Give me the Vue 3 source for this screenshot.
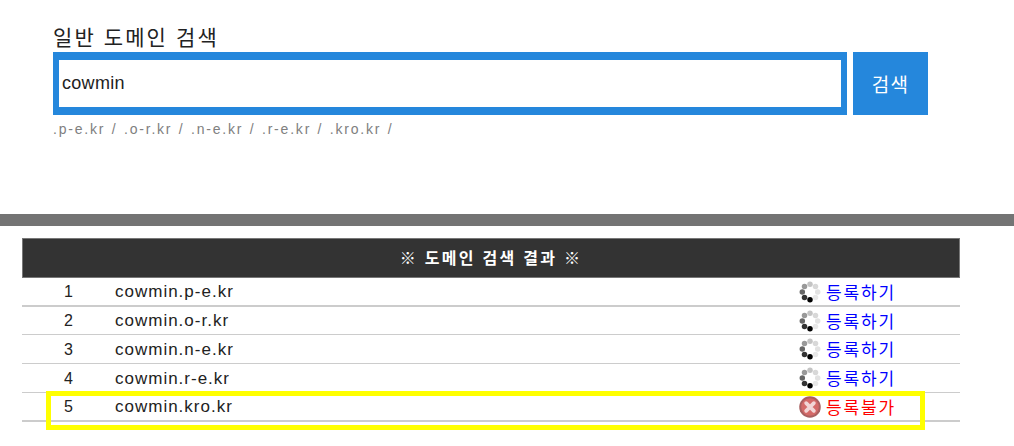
<script setup>
const suffixes = ['.p-e.kr', '.o-r.kr', '.n-e.kr', '.r-e.kr', '.kro.kr']
const rows = [
  { no: 1, domain: 'cowmin.p-e.kr', ok: true },
  { no: 2, domain: 'cowmin.o-r.kr', ok: true },
  { no: 3, domain: 'cowmin.n-e.kr', ok: true },
  { no: 4, domain: 'cowmin.r-e.kr', ok: true },
  { no: 5, domain: 'cowmin.kro.kr', ok: false },
]
const dots = [
  { x: 8, y: 13.6, r: 2, c: '#000' },
  { x: 4, y: 12, r: 2, c: '#333' },
  { x: 2.4, y: 8, r: 2, c: '#666' },
  { x: 4, y: 4, r: 2, c: '#999' },
  { x: 8, y: 2.4, r: 2, c: '#c4c4c4' },
  { x: 12, y: 4, r: 2, c: '#d8d8d8' },
  { x: 13.6, y: 8, r: 2, c: '#e2e2e2' },
  { x: 12, y: 12, r: 2, c: '#e8e8e8' },
]
</script>

<template>
  <div class="page">
    <section class="search">
      <h2 class="title">일반 도메인 검색</h2>
      <div class="search-row">
        <input class="search-input" value="cowmin" readonly />
        <button class="search-btn">검색</button>
      </div>
      <p class="hint">
        <span v-for="s in suffixes" :key="s">{{ s }} / </span>
      </p>
    </section>
    <div class="divider"></div>
    <section class="result">
      <div class="result-head">※ 도메인 검색 결과 ※</div>
      <div v-for="r in rows" :key="r.no" class="row" :class="'row-' + r.no">
        <span class="num">{{ r.no }}</span>
        <span class="domain">{{ r.domain }}</span>
        <span class="state">
          <svg v-if="r.ok" class="icon" viewBox="0 0 16 16">
            <circle v-for="(d, i) in dots" :key="i" :cx="d.x" :cy="d.y" :r="d.r" :fill="d.c" />
          </svg>
          <svg v-else class="icon" viewBox="0 0 20 20">
            <circle cx="10" cy="10" r="9.8" fill="#a86060" />
            <circle cx="10" cy="10" r="8" fill="#d46a68" />
            <path d="M6.5 6.5l7 7M13.5 6.5l-7 7" stroke="#f2d6d6" stroke-width="3.4" stroke-linecap="round" />
          </svg>
          <a class="link" :class="{ blocked: !r.ok }">{{ r.ok ? '등록하기' : '등록불가' }}</a>
        </span>
      </div>
      <div class="highlight"></div>
    </section>
  </div>
</template>

<style scoped>
.page {
  width: 1014px;
  height: 446px;
  overflow: hidden;
  background: #fff;
  font-family: "Liberation Sans", "Noto Sans CJK KR", sans-serif;
}
.search {
  height: 214px;
  padding: 22px 0 0 53px;
  box-sizing: border-box;
}
.title {
  margin: 0;
  height: 30px;
  line-height: 31px;
  font-size: 21px;
  font-weight: normal;
  color: #222;
  letter-spacing: 2.1px;
}
.search-row {
  display: flex;
  gap: 6px;
}
.search-input {
  width: 794px;
  height: 63px;
  box-sizing: border-box;
  border: solid #2587dc;
  border-width: 8px 6px;
  padding: 0 3px;
  font-family: inherit;
  font-size: 18px;
  letter-spacing: 0.3px;
  color: #222;
  outline: none;
}
.search-btn {
  width: 75px;
  height: 63px;
  border: 0;
  padding: 0;
  background: #2587dc;
  color: #fff;
  font-family: inherit;
  font-size: 19px;
  letter-spacing: 1.2px;
}
.hint {
  margin: 5px 0 0;
  font-size: 14px;
  line-height: 18px;
  color: #808080;
  letter-spacing: 1.8px;
  word-spacing: 0.8px;
  white-space: pre-wrap;
}
.divider {
  height: 12px;
  background: #747474;
}
.result {
  position: relative;
  width: 938px;
  margin: 12px 0 0 22px;
}
.result-head {
  height: 40px;
  box-sizing: border-box;
  border: 1px solid #777;
  background: #333;
  color: #fff;
  font-size: 16px;
  font-weight: bold;
  line-height: 39px;
  text-align: center;
  letter-spacing: 2.3px;
}
.row {
  display: flex;
  align-items: center;
  height: 29px;
  box-sizing: border-box;
  border-bottom: 1px solid #ccc;
  font-size: 16px;
  color: #222;
}
.row-1,
.row-5 {
  border-bottom-width: 2px;
}
.row-2 {
  height: 28px;
}
.num {
  width: 93px;
  padding-top: 1px;
  text-align: center;
}
.domain {
  width: 684px;
  padding-top: 1px;
  font-size: 17px;
  letter-spacing: 1px;
}
.state {
  display: flex;
  align-items: center;
  gap: 5px;
}
.icon {
  width: 22px;
  height: 22px;
  flex: none;
}
.link {
  margin-bottom: 1px;
  font-size: 17px;
  color: #0000ff;
  letter-spacing: 1.9px;
}
.link.blocked {
  color: #ff0000;
}
.highlight {
  position: absolute;
  left: 24px;
  top: 153px;
  width: 879px;
  height: 39px;
  box-sizing: border-box;
  border: 5px solid #ffff00;
}
</style>
